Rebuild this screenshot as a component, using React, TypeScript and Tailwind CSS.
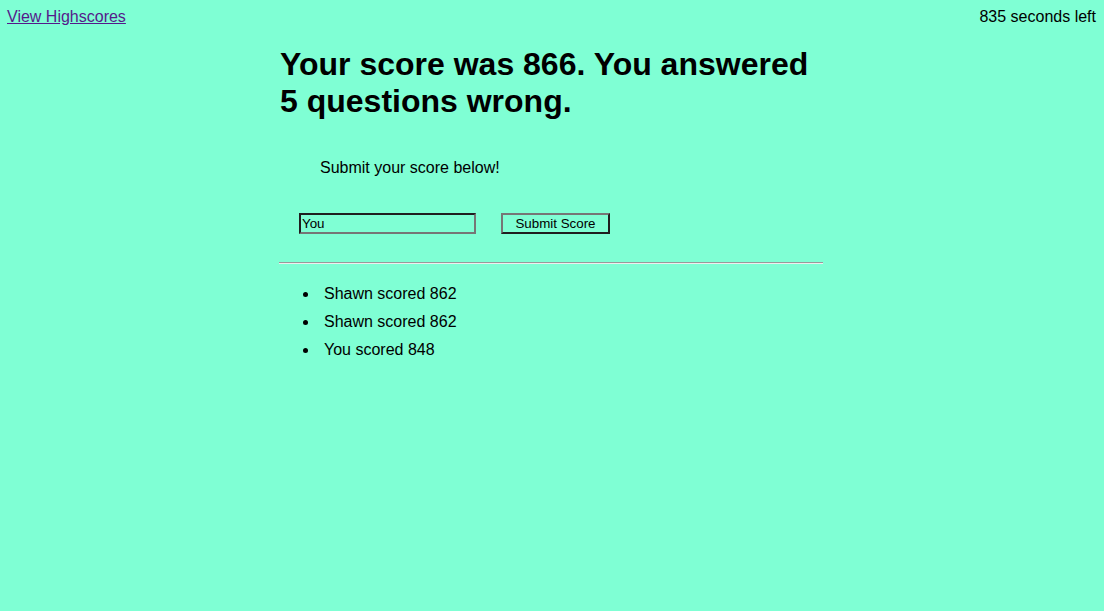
import React from "react";

export default function App() {
  const scores = [
    "Shawn scored 862",
    "Shawn scored 862",
    "You scored 848",
  ];
  return (
    <div className="min-h-screen w-full bg-[#7fffd4] text-black font-['Liberation_Sans',Arial,sans-serif] text-[16px] leading-[18.4px]">
      <div className="flex justify-between pl-[7px] pr-[8px] pt-[8px]">
        <a href="#" className="text-[#551a8b] underline">View Highscores</a>
        <span>835 seconds left</span>
      </div>
      <div className="ml-[279px] w-[545px]">
        <h1 className="mt-[20px] text-[32px] leading-[36.8px] font-bold pl-[1px]">
          Your score was 866. You answered 5 questions wrong.
        </h1>
        <p className="mt-[39px] pl-[41px]">Submit your score below!</p>
        <div className="mt-[36px] flex items-start pl-[20px]">
          <input
            defaultValue="You"
            className="w-[177px] h-[21px] border-2 border-t-[#1f1f1f] border-l-[#1f1f1f] border-b-[#767676] border-r-[#767676] bg-transparent px-[1px] text-[13.33px] leading-[15px] font-['Liberation_Sans',Arial,sans-serif] outline-none"
          />
          <button className="ml-[25px] w-[109px] h-[21px] border-2 border-t-[#767676] border-l-[#767676] border-b-[#1f1f1f] border-r-[#1f1f1f] bg-transparent text-[13.33px] leading-[15px] font-['Liberation_Sans',Arial,sans-serif]">
            Submit Score
          </button>
        </div>
        <div className="mt-[28px] h-[2px] border-t border-b border-t-[#9a9a9a] border-b-[#eeeeee] w-[544px]" />
        <ul className="mt-[16px] pl-[24px]">
          {scores.map((s, i) => (
            <li key={i} className="leading-[28px] flex items-center">
              <span className="w-[5px] h-[5px] rounded-full bg-black mr-[16px] mt-[1px]" />
              <span>{s}</span>
            </li>
          ))}
        </ul>
      </div>
    </div>
  );
}
